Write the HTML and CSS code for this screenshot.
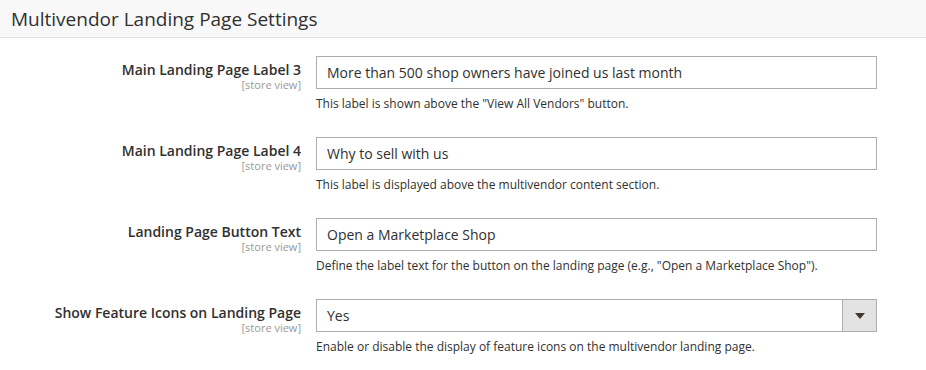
FILE: index.html
```html
<!DOCTYPE html>
<html lang="en">
<head>
    <meta charset="UTF-8">
    <meta name="viewport" content="width=device-width, initial-scale=1.0">
    <title>Multivendor Landing Page Settings</title>
    <link rel="stylesheet" href="styles.css">
</head>
<body>
    <div class="section-head">
        <h2>Multivendor Landing Page Settings</h2>
    </div>

    <form class="section-body">
        <div class="field">
            <label class="field-label">
                <span>Main Landing Page Label 3</span>
                <span class="scope">[store view]</span>
            </label>
            <div class="field-control">
                <input type="text" value="More than 500 shop owners have joined us last month">
                <p class="note">This label is shown above the "View All Vendors" button.</p>
            </div>
        </div>

        <div class="field">
            <label class="field-label">
                <span>Main Landing Page Label 4</span>
                <span class="scope">[store view]</span>
            </label>
            <div class="field-control">
                <input type="text" value="Why to sell with us">
                <p class="note">This label is displayed above the multivendor content section.</p>
            </div>
        </div>

        <div class="field">
            <label class="field-label">
                <span>Landing Page Button Text</span>
                <span class="scope">[store view]</span>
            </label>
            <div class="field-control">
                <input type="text" value="Open a Marketplace Shop">
                <p class="note">Define the label text for the button on the landing page (e.g., "Open a Marketplace Shop").</p>
            </div>
        </div>

        <div class="field">
            <label class="field-label">
                <span>Show Feature Icons on Landing Page</span>
                <span class="scope">[store view]</span>
            </label>
            <div class="field-control">
                <div class="select">
                    <span class="select-value">Yes</span>
                    <span class="select-arrow"></span>
                </div>
                <p class="note">Enable or disable the display of feature icons on the multivendor landing page.</p>
            </div>
        </div>
    </form>
</body>
</html>
```

FILE: styles.css
```css
body {
    margin: 0;
    font-family: "Open Sans", "Liberation Sans", sans-serif;
    color: #303030;
    background-color: #fff;
}
.section-head {
    height: 37px;
    background-color: #f8f8f8;
    border-bottom: 1px solid #e3e3e3;
    padding-left: 11px;
    display: flex;
    align-items: center;
}
.section-head h2 {
    margin: 0;
    font-size: 19px;
    font-weight: 400;
    color: #303030;
}
.section-body {
    padding-top: 18px;
}
.field {
    display: grid;
    grid-template-columns: 301px 561px;
    column-gap: 15px;
    margin-bottom: 24px;
}
.field-label {
    display: flex;
    flex-direction: column;
    align-items: flex-end;
    padding-top: 5px;
    font-size: 14px;
    font-weight: 600;
    line-height: 17px;
}
.field-label .scope {
    margin-top: 1px;
    font-size: 11px;
    font-weight: 400;
    line-height: 12px;
    color: #999;
}
.field-control input,
.select {
    box-sizing: border-box;
    width: 561px;
    height: 33px;
    border: 1px solid #adadad;
    font-family: inherit;
    font-size: 14px;
    color: #303030;
    padding: 0 10px;
    margin: 0;
}
.select {
    display: flex;
    align-items: center;
    padding-right: 0;
}
.select-value {
    flex: 1;
}
.select-arrow {
    width: 33px;
    height: 31px;
    background-color: #e3e3e3;
    border-left: 1px solid #adadad;
    position: relative;
}
.select-arrow::after {
    content: "";
    position: absolute;
    left: 12px;
    top: 13px;
    border-left: 5px solid transparent;
    border-right: 5px solid transparent;
    border-top: 6px solid #41362f;
}
.note {
    margin: 6px 0 0;
    font-size: 12px;
    line-height: 18px;
    color: #303030;
}
```
